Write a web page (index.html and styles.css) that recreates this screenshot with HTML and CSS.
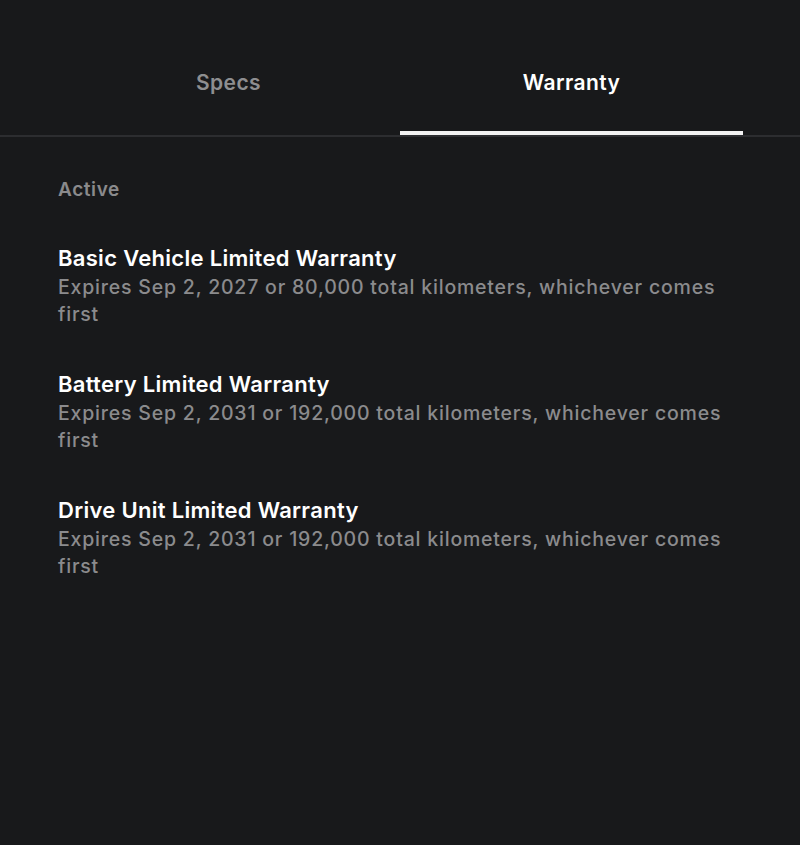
FILE: index.html
```html
<!DOCTYPE html>
<html>
<head>
<meta charset="utf-8">
<link rel="stylesheet" href="styles.css">
</head>
<body>
<div class="tabs">
  <div class="tab">Specs</div>
  <div class="tab active">Warranty</div>
</div>
<div class="content">
  <div class="section-label">Active</div>
  <div class="item">
    <div class="title">Basic Vehicle Limited Warranty</div>
    <div class="desc">Expires Sep 2, 2027 or 80,000 total kilometers, whichever comes first</div>
  </div>
  <div class="item">
    <div class="title">Battery Limited Warranty</div>
    <div class="desc">Expires Sep 2, 2031 or 192,000 total kilometers, whichever comes first</div>
  </div>
  <div class="item">
    <div class="title">Drive Unit Limited Warranty</div>
    <div class="desc">Expires Sep 2, 2031 or 192,000 total kilometers, whichever comes first</div>
  </div>
</div>
</body>
</html>
```
FILE: styles.css
```css
html, body {
  margin: 0;
  padding: 0;
  background: #18191b;
  height: 100%;
}
body {
  font-family: Inter, "Open Sans", sans-serif;
  color: #fff;
}
.tabs {
  display: flex;
  padding: 0 57px;
  border-bottom: 2px solid #2c2d30;
}
.tab {
  flex: 1;
  text-align: center;
  height: 135px;
  box-sizing: border-box;
  padding-top: 70px;
  font-size: 21px;
  font-weight: 600;
  color: #8e8e90;
  letter-spacing: 0.4px;
  border-bottom: 4px solid transparent;
}
.tab.active {
  color: #fff;
  border-bottom-color: #f2f2f2;
}
.content {
  padding: 40px 58px;
}
.section-label {
  font-size: 19px;
  font-weight: 600;
  color: #8a8a8c;
  letter-spacing: 0.6px;
  line-height: 26px;
  margin-bottom: 39px;
}
.item {
  margin-bottom: 40px;
}
.title {
  font-size: 22px;
  font-weight: 600;
  color: #fff;
  line-height: 32px;
  letter-spacing: 0.3px;
}
.desc {
  font-size: 19.5px;
  font-weight: 500;
  color: #8b8b8d;
  line-height: 27px;
  letter-spacing: 0.8px;
}
```
